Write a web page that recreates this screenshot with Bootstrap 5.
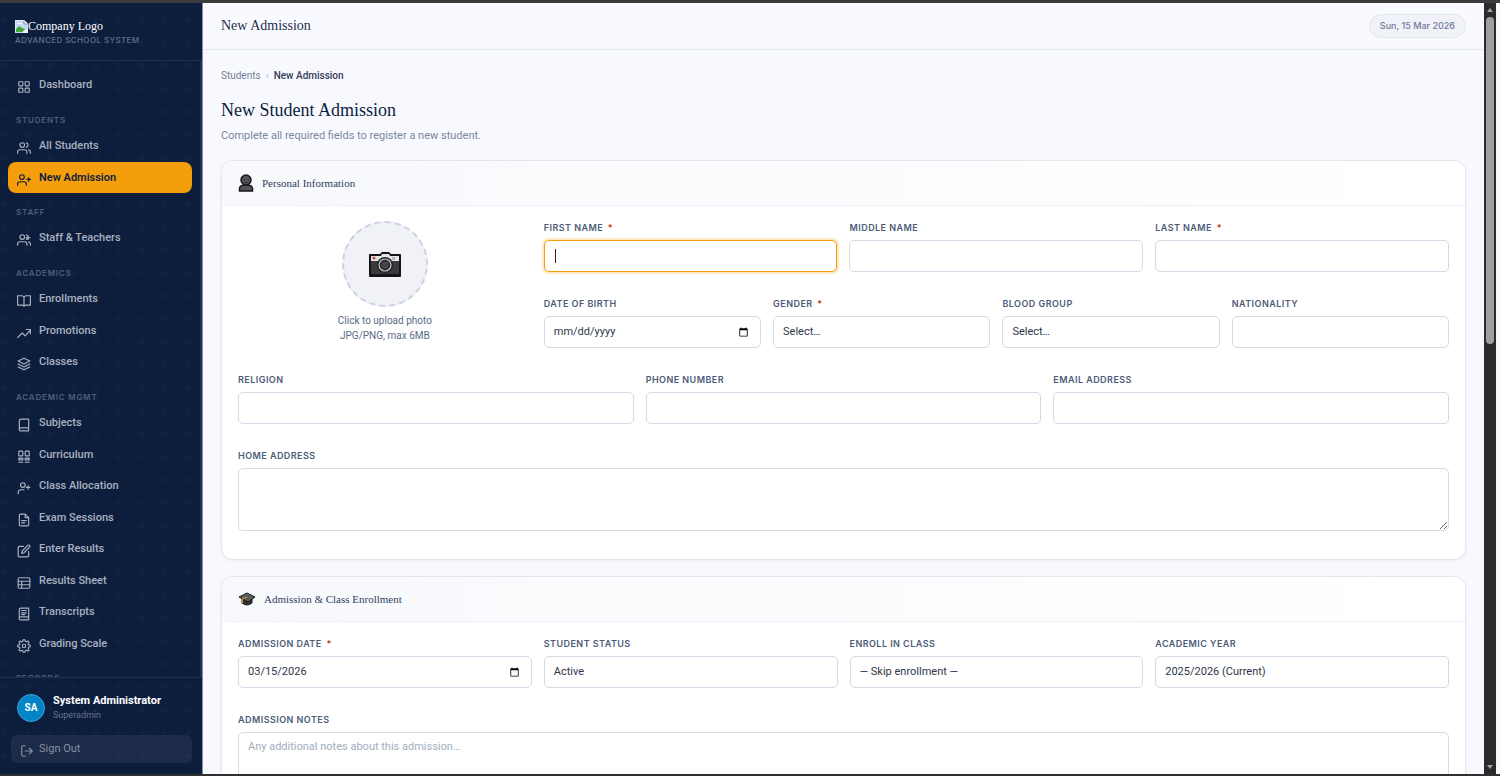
<!DOCTYPE html>
<html lang="en">
<head>
<meta charset="utf-8">
<meta name="viewport" content="width=device-width, initial-scale=1">
<title>New Admission</title>
<link rel="stylesheet" href="https://cdn.jsdelivr.net/npm/bootstrap@5.3.0/dist/css/bootstrap.min.css">
<style>
:root{--navy:#0d1e3d;--amber:#f59e0b;--line:#e4e7f0;--field:#d5d9e6;--muted:#718096;--serif:"Liberation Serif",serif;--caps:Inter,sans-serif}
body{font-family:Roboto,"Open Sans",sans-serif;font-size:11px;line-height:16px;color:#2d3748;background:#f8f9fe}
.app-frame{border-top:3px solid #3c3c3c;border-bottom:2px solid #303030}
.ico{width:14px;height:14px;fill:none;stroke:currentColor;stroke-width:2;stroke-linecap:round;stroke-linejoin:round;flex:none}

/* Sidebar */
.sidebar{width:203px;color:#fff;border-right:1px solid #8793a5;background:var(--navy) url("data:image/svg+xml,%3Csvg xmlns='http://www.w3.org/2000/svg' width='23' height='23'%3E%3Cpath d='M4 13v8M0 17h8' stroke='%23fff' stroke-opacity='.015' stroke-width='2'/%3E%3C/svg%3E")}
.brand{padding:15px 15px 14px;border-bottom:1px solid rgba(255,255,255,.08);height:59px}
.brand-name{font:12px/16px var(--serif);color:#fff}
.brand-tag{font:500 8px/12px var(--caps);letter-spacing:.05em;color:#61708a}
.side-scroll{padding:8px 8px 0;min-height:0;overflow:hidden;border-right:2px solid #1f2f50}
.side-label{font:600 8px/12px var(--caps);padding:13px 8px 4px;letter-spacing:.1em;color:#4f5e79}
.side-list li:nth-child(odd){margin-bottom:1px}
.side-link{height:31px;padding:0 9px;gap:8px;border-radius:8px;color:#a9b1c0;font-weight:500;text-decoration:none}
.side-link .ico,.signout .ico{margin-top:4px}
.side-link.active{background:var(--amber);color:var(--navy);font-weight:600}
.side-link:hover{color:#fff}
.side-user{border-top:1px solid rgba(255,255,255,.09);padding:16px 10px 11px 11px}
.user-row{padding-left:6px;margin-bottom:13px}
.avatar{width:28px;height:28px;border-radius:50%;background:#0284c7;border:1px solid #38a4df;font-size:10px;font-weight:700}
.user-name{font-weight:700;line-height:14px}
.user-role{font-size:9px;line-height:14px;color:#66748c}
.signout{height:28px;padding:0 9px;gap:5px;border:0;border-radius:6px;background:rgba(255,255,255,.06);color:#8791a4}

/* Main */
.topbar{height:47px;padding:0 18px;border-bottom:1px solid var(--line);background:#f9faff}
.topbar h1{font:14px/20px var(--serif);color:#22304c}
.date-pill{height:24px;padding:0 10px;border:1px solid var(--line);border-radius:12px;background:#f0f2f8;color:#707a9c;font:500 9px/12px var(--caps)}
.content{padding:18px 18px 0;overflow-y:auto;min-height:0}
.content::-webkit-scrollbar{display:none}
.crumbs{font-size:10px;--bs-breadcrumb-divider:"›";--bs-breadcrumb-item-padding-x:5px;--bs-breadcrumb-divider-color:#b4bccb}
.crumbs a{color:var(--muted);text-decoration:none}
.crumbs .active{color:#33405a;font-weight:500}
.page-title{font:18px/28px var(--serif);color:#0d1e3d}
.page-lead{color:#7a879c}
.panel{--bs-card-border-color:var(--line);--bs-card-border-radius:12px;--bs-card-inner-border-radius:11px;box-shadow:0 1px 3px rgba(20,30,70,.06)}
.panel .card-header{height:45px;padding:0 16px;gap:8px;background:linear-gradient(90deg,#f8f9fc,#fff);border-bottom:1px solid #edf0f6}
.panel .card-header h3{font:11px/16px var(--serif);color:#2f405e}
.panel .card-body{padding:16px 16px 28px}
.form-rows{--bs-gutter-x:12px;--bs-gutter-y:26px}
.form-label{display:block;font:600 9px/12px var(--caps);margin-bottom:6px;letter-spacing:.05em;text-transform:uppercase;color:#4d5b78}
.form-label span{color:#c0392b;margin-left:2px}
.form-control,.form-select{height:32px;padding:0 9px;font-size:11px;line-height:16px;border:1px solid var(--field);border-radius:5px;color:#2d3748;background-color:#fff}
.form-select{background-image:none}
textarea.form-control{height:63px;padding:6px 9px;min-height:0}
.form-control::placeholder{color:#a0aec0}
.is-current,.form-control:focus{border-color:var(--amber);box-shadow:0 0 0 2px #fde9c4}
.is-current{caret-color:transparent;background:linear-gradient(#222,#222) 10px center/1px 14px no-repeat #fff}
.photo-drop{cursor:pointer;color:#5a6b85;font-size:10px;line-height:15px}
.photo-ring{width:86px;height:86px;border:2px dashed #cbd2e0;border-radius:50%;background:#f0f2f8;margin:-1px 0 6px}

/* Page scroll rail */
.rail{width:12px;margin-right:4px;background:#2b2b2b}
.rail-track{width:8px}
.rail-thumb{background:#9f9f9f;border-radius:4px;height:44%}
</style>
</head>
<body>
<svg class="d-none" xmlns="http://www.w3.org/2000/svg">
<symbol id="grid" viewBox="0 0 24 24"><rect x="3" y="3" width="7" height="7" rx="1"/><rect x="14" y="3" width="7" height="7" rx="1"/><rect x="3" y="14" width="7" height="7" rx="1"/><rect x="14" y="14" width="7" height="7" rx="1"/></symbol>
<symbol id="users" viewBox="0 0 24 24"><path d="M17 21v-2a4 4 0 0 0-4-4H5a4 4 0 0 0-4 4v2M23 21v-2a4 4 0 0 0-3-3.87M16 3.13a4 4 0 0 1 0 7.75"/><circle cx="9" cy="7" r="4"/></symbol>
<symbol id="userplus" viewBox="0 0 24 24"><path d="M16 21v-2a4 4 0 0 0-4-4H5a4 4 0 0 0-4 4v2M20 8v6M23 11h-6"/><circle cx="8.500" cy="7" r="4"/></symbol>
<symbol id="staff" viewBox="0 0 24 24"><path d="M17 21v-2a4 4 0 0 0-4-4H5a4 4 0 0 0-4 4v2M23 21v-2a4 4 0 0 0-3-3.87M16 3.13a4 4 0 0 1 0 7.750M19 5v6M16 8h6"/><circle cx="9" cy="7" r="4"/></symbol>
<symbol id="open" viewBox="0 0 24 24"><path d="M1 3h7a4 4 0 0 1 4 3v15a3 3 0 0 0-3-2H1zM23 3h-7a4 4 0 0 0-4 3v15a3 3 0 0 1 3-2h8z"/></symbol>
<symbol id="trend" viewBox="0 0 24 24"><path d="M1 20l8-8 5 5 9-10M16 6h7v7"/></symbol>
<symbol id="layers" viewBox="0 0 24 24"><path d="M12 2L2 7l10 5 10-5zM2 12l10 5 10-5M2 17l10 5 10-5"/></symbol>
<symbol id="book" viewBox="0 0 24 24"><path d="M4 19.500A2.500 2.500 0 0 1 6.500 17H20M6.500 2H20v20H6.500A2.500 2.500 0 0 1 4 19.500v-15A2.500 2.500 0 0 1 6.500 2z"/></symbol>
<symbol id="curr" viewBox="0 0 24 24"><rect x="3" y="2" width="7" height="8" rx="1"/><rect x="14" y="2" width="7" height="8" rx="1"/><rect x="3" y="14" width="7" height="3"/><rect x="14" y="14" width="7" height="3"/><path d="M3 21h7M14 21h7"/></symbol>
<symbol id="alloc" viewBox="0 0 24 24"><circle cx="10" cy="7" r="4"/><path d="M2 22v-2a5 5 0 0 1 5-5h5M19 8v6M16 11h6"/></symbol>
<symbol id="file" viewBox="0 0 24 24"><path d="M14 2H6a2 2 0 0 0-2 2v16a2 2 0 0 0 2 2h12a2 2 0 0 0 2-2V8zM14 2v6h6M16 13H8M13 17H8"/></symbol>
<symbol id="edit" viewBox="0 0 24 24"><path d="M11 4H4a2 2 0 0 0-2 2v14a2 2 0 0 0 2 2h14a2 2 0 0 0 2-2v-7M18.500 2.500a2.100 2.100 0 0 1 3 3L12 15l-4 1 1-4z"/></symbol>
<symbol id="sheet" viewBox="0 0 24 24"><rect x="2" y="3" width="20" height="18" rx="2"/><path d="M2 9h20M2 15h20M8 9v12"/></symbol>
<symbol id="script" viewBox="0 0 24 24"><path d="M4 19V4a2 2 0 0 1 2-2h14v20H6a2 2 0 0 1 0-5h14M8 6h8M8 10h8M8 13h5"/></symbol>
<symbol id="gear" viewBox="0 0 24 24"><circle cx="12" cy="12" r="3"/><path d="M19.400 15a1.650 1.650 0 0 0 .33 1.820l.06.06a2 2 0 1 1-2.830 2.830l-.06-.06a1.650 1.650 0 0 0-2.820 1.170V21a2 2 0 0 1-4 0v-.09a1.650 1.650 0 0 0-2.900-1.080l-.06.06a2 2 0 1 1-2.830-2.830l.06-.06A1.650 1.650 0 0 0 3.090 14H3a2 2 0 0 1 0-4h.09a1.650 1.650 0 0 0 1.170-2.820l-.06-.06a2 2 0 1 1 2.830-2.830l.06.06A1.650 1.650 0 0 0 10 3.090V3a2 2 0 0 1 4 0v.09a1.650 1.650 0 0 0 2.820 1.170l.06-.06a2 2 0 1 1 2.830 2.830l-.06.06A1.650 1.650 0 0 0 20.910 10H21a2 2 0 0 1 0 4h-.09a1.650 1.650 0 0 0-1.510 1z"/></symbol>
<symbol id="out" viewBox="0 0 24 24"><path d="M9 21H5a2 2 0 0 1-2-2V5a2 2 0 0 1 2-2h4M16 17l5-5-5-5M21 12H9"/></symbol>
</svg>

<div class="app-frame vh-100 d-flex overflow-hidden">
<aside class="sidebar d-flex flex-column flex-shrink-0">
  <div class="brand">
    <div class="brand-name d-flex align-items-center">
      <svg width="13" height="13" viewBox="0 0 13 13" aria-hidden="true"><path d="M0 0h9l4 4v9H0z" fill="#c6d8f1"/><path d="M.5 12.500V.5H9L12.500 4" fill="none" stroke="#e8eaee"/><path d="M3 3h3l1 1H2z" fill="#fff"/><path d="M1 12V9l3-3 3 2 3 1-3 3z" fill="#45a535"/><path d="M13 4H9V0zM13 8l-6 5h6z" fill="#f4f4f4"/><path d="M9 .5V4h3.500" fill="none" stroke="#8b929c"/></svg>
      <span>Company Logo</span>
    </div>
    <div class="brand-tag">ADVANCED SCHOOL SYSTEM</div>
  </div>
  <nav class="side-scroll flex-grow-1" aria-label="Main menu">
    <ul class="side-list list-unstyled mb-0">
      <li><a class="side-link d-flex align-items-center" href="#"><svg class="ico"><use href="#grid"/></svg>Dashboard</a></li>
    </ul>
    <div class="side-label">STUDENTS</div>
    <ul class="side-list list-unstyled mb-0">
      <li><a class="side-link d-flex align-items-center" href="#"><svg class="ico"><use href="#users"/></svg>All Students</a></li>
      <li><a class="side-link active d-flex align-items-center" href="#" aria-current="page"><svg class="ico"><use href="#userplus"/></svg>New Admission</a></li>
    </ul>
    <div class="side-label">STAFF</div>
    <ul class="side-list list-unstyled mb-0">
      <li><a class="side-link d-flex align-items-center" href="#"><svg class="ico"><use href="#staff"/></svg>Staff &amp; Teachers</a></li>
    </ul>
    <div class="side-label">ACADEMICS</div>
    <ul class="side-list list-unstyled mb-0">
      <li><a class="side-link d-flex align-items-center" href="#"><svg class="ico"><use href="#open"/></svg>Enrollments</a></li>
      <li><a class="side-link d-flex align-items-center" href="#"><svg class="ico"><use href="#trend"/></svg>Promotions</a></li>
      <li><a class="side-link d-flex align-items-center" href="#"><svg class="ico"><use href="#layers"/></svg>Classes</a></li>
    </ul>
    <div class="side-label">ACADEMIC MGMT</div>
    <ul class="side-list list-unstyled mb-0">
      <li><a class="side-link d-flex align-items-center" href="#"><svg class="ico"><use href="#book"/></svg>Subjects</a></li>
      <li><a class="side-link d-flex align-items-center" href="#"><svg class="ico"><use href="#curr"/></svg>Curriculum</a></li>
      <li><a class="side-link d-flex align-items-center" href="#"><svg class="ico"><use href="#alloc"/></svg>Class Allocation</a></li>
      <li><a class="side-link d-flex align-items-center" href="#"><svg class="ico"><use href="#file"/></svg>Exam Sessions</a></li>
      <li><a class="side-link d-flex align-items-center" href="#"><svg class="ico"><use href="#edit"/></svg>Enter Results</a></li>
      <li><a class="side-link d-flex align-items-center" href="#"><svg class="ico"><use href="#sheet"/></svg>Results Sheet</a></li>
      <li><a class="side-link d-flex align-items-center" href="#"><svg class="ico"><use href="#script"/></svg>Transcripts</a></li>
      <li><a class="side-link d-flex align-items-center" href="#"><svg class="ico"><use href="#gear"/></svg>Grading Scale</a></li>
    </ul>
    <div class="side-label">RECORDS</div>
  </nav>
  <div class="side-user">
    <div class="user-row d-flex align-items-center gap-2">
      <div class="avatar d-flex align-items-center justify-content-center">SA</div>
      <div><div class="user-name">System Administrator</div><div class="user-role">Superadmin</div></div>
    </div>
    <button type="button" class="signout d-flex align-items-center w-100"><svg class="ico"><use href="#out"/></svg>Sign Out</button>
  </div>
</aside>

<main class="flex-grow-1 d-flex flex-column overflow-hidden">
  <header class="topbar d-flex align-items-center justify-content-between flex-shrink-0">
    <h1 class="m-0">New Admission</h1>
    <div class="date-pill d-flex align-items-center">Sun, 15 Mar 2026</div>
  </header>
  <div class="content flex-grow-1">
    <nav aria-label="breadcrumb"><ol class="breadcrumb crumbs mb-2">
      <li class="breadcrumb-item"><a href="#">Students</a></li>
      <li class="breadcrumb-item active" aria-current="page">New Admission</li>
    </ol></nav>
    <h2 class="page-title mb-1 pt-1">New Student Admission</h2>
    <p class="page-lead mb-3">Complete all required fields to register a new student.</p>

    <form>
    <section class="card panel mb-3">
      <div class="card-header d-flex align-items-center">
        <svg width="16" height="18" viewBox="0 0 16 18" aria-hidden="true"><path d="M1.500 17v-3q1-3 5-3h3q4 0 5 3v3z" fill="#55565b" stroke="#17181a" stroke-width="1.500"/><circle cx="8" cy="6" r="5" fill="#55565b" stroke="#17181a" stroke-width="1.500"/><path d="M6 5.500v1M10 5.500v1M6.500 8.500h3" stroke="#222"/></svg>
        <h3 class="m-0">Personal Information</h3>
      </div>
      <div class="card-body">
        <div class="row form-rows">
          <div class="col-3">
            <label class="photo-drop d-flex flex-column align-items-center text-center" for="photo">
              <span class="photo-ring d-flex align-items-center justify-content-center">
                <svg width="32" height="25" viewBox="0 0 32 25" aria-hidden="true"><path d="M0 3q0-1 1-1h10l2-2h7l2 2h9q1 0 1 1v21q0 1-1 1H1q-1 0-1-1z" fill="#141414"/><path d="M2 4h10l1-2h7l1 2h9v5H2z" fill="#e4e5e8"/><path d="M2 9h28v13H2z" fill="#3a3a3c"/><circle cx="5" cy="6" r="1.500" fill="#d4452c"/><path d="M23 5h3v3h-3z" fill="#b6b8bc"/><circle cx="16" cy="13" r="8" fill="#222"/><circle cx="16" cy="13" r="6" fill="#2e2f31" stroke="#c4c6ca" stroke-width="1.200"/><circle cx="16" cy="13" r="3.500" fill="#454649"/></svg>
              </span>
              <span>Click to upload photo<br>JPG/PNG, max 6MB</span>
            </label>
            <input class="d-none" type="file" id="photo" accept="image/png,image/jpeg">
          </div>
          <div class="col-9">
            <div class="row form-rows">
              <div class="col-4"><label class="form-label" for="first">First Name <span>*</span></label><input class="form-control is-current" id="first" type="text"></div>
              <div class="col-4"><label class="form-label" for="middle">Middle Name</label><input class="form-control" id="middle" type="text"></div>
              <div class="col-4"><label class="form-label" for="last">Last Name <span>*</span></label><input class="form-control" id="last" type="text"></div>
              <div class="col-3"><label class="form-label" for="dob">Date of Birth</label><input class="form-control" id="dob" type="date"></div>
              <div class="col-3"><label class="form-label" for="gender">Gender <span>*</span></label><select class="form-select" id="gender"><option>Select…</option><option>Female</option><option>Male</option></select></div>
              <div class="col-3"><label class="form-label" for="blood">Blood Group</label><select class="form-select" id="blood"><option>Select…</option><option>A+</option><option>B+</option><option>O+</option></select></div>
              <div class="col-3"><label class="form-label" for="nation">Nationality</label><input class="form-control" id="nation" type="text"></div>
            </div>
          </div>
          <div class="col-4"><label class="form-label" for="religion">Religion</label><input class="form-control" id="religion" type="text"></div>
          <div class="col-4"><label class="form-label" for="phone">Phone Number</label><input class="form-control" id="phone" type="tel"></div>
          <div class="col-4"><label class="form-label" for="email">Email Address</label><input class="form-control" id="email" type="email"></div>
          <div class="col-12"><label class="form-label" for="home">Home Address</label><textarea class="form-control" id="home"></textarea></div>
        </div>
      </div>
    </section>

    <section class="card panel mb-3">
      <div class="card-header d-flex align-items-center">
        <svg width="18" height="14" viewBox="0 0 18 14" aria-hidden="true"><path d="M4 6v5q5 4 10 0V6z" fill="#303033" stroke="#18181a"/><path d="M1 5l8-4 8 4-7 5z" fill="#5a5b5f" stroke="#18181a" stroke-linejoin="round"/><path d="M9 5L4.500 7v4" fill="none" stroke="#c89a1e" stroke-width="1.200"/></svg>
        <h3 class="m-0">Admission &amp; Class Enrollment</h3>
      </div>
      <div class="card-body">
        <div class="row form-rows">
          <div class="col-3"><label class="form-label" for="adate">Admission Date <span>*</span></label><input class="form-control" id="adate" type="date" value="2026-03-15"></div>
          <div class="col-3"><label class="form-label" for="status">Student Status</label><select class="form-select" id="status"><option>Active</option><option>Inactive</option></select></div>
          <div class="col-3"><label class="form-label" for="enroll">Enroll in Class</label><select class="form-select" id="enroll"><option>— Skip enrollment —</option></select></div>
          <div class="col-3"><label class="form-label" for="year">Academic Year</label><select class="form-select" id="year"><option>2025/2026 (Current)</option></select></div>
          <div class="col-12"><label class="form-label" for="notes">Admission Notes</label><textarea class="form-control" id="notes" placeholder="Any additional notes about this admission…"></textarea></div>
        </div>
      </div>
    </section>
    </form>
  </div>
</main>

<div class="rail d-flex flex-column align-items-center flex-shrink-0" aria-hidden="true">
  <svg width="8" height="14" viewBox="0 0 8 14"><path d="M1 9l3-4 3 4z" fill="#9f9f9f"/></svg>
  <div class="rail-track flex-grow-1"><div class="rail-thumb"></div></div>
  <svg width="8" height="14" viewBox="0 0 8 14"><path d="M1 5l3 4 3-4z" fill="#9f9f9f"/></svg>
</div>
</div>
<script src="https://cdn.jsdelivr.net/npm/bootstrap@5.3.0/dist/js/bootstrap.bundle.min.js"></script>
</body>
</html>
